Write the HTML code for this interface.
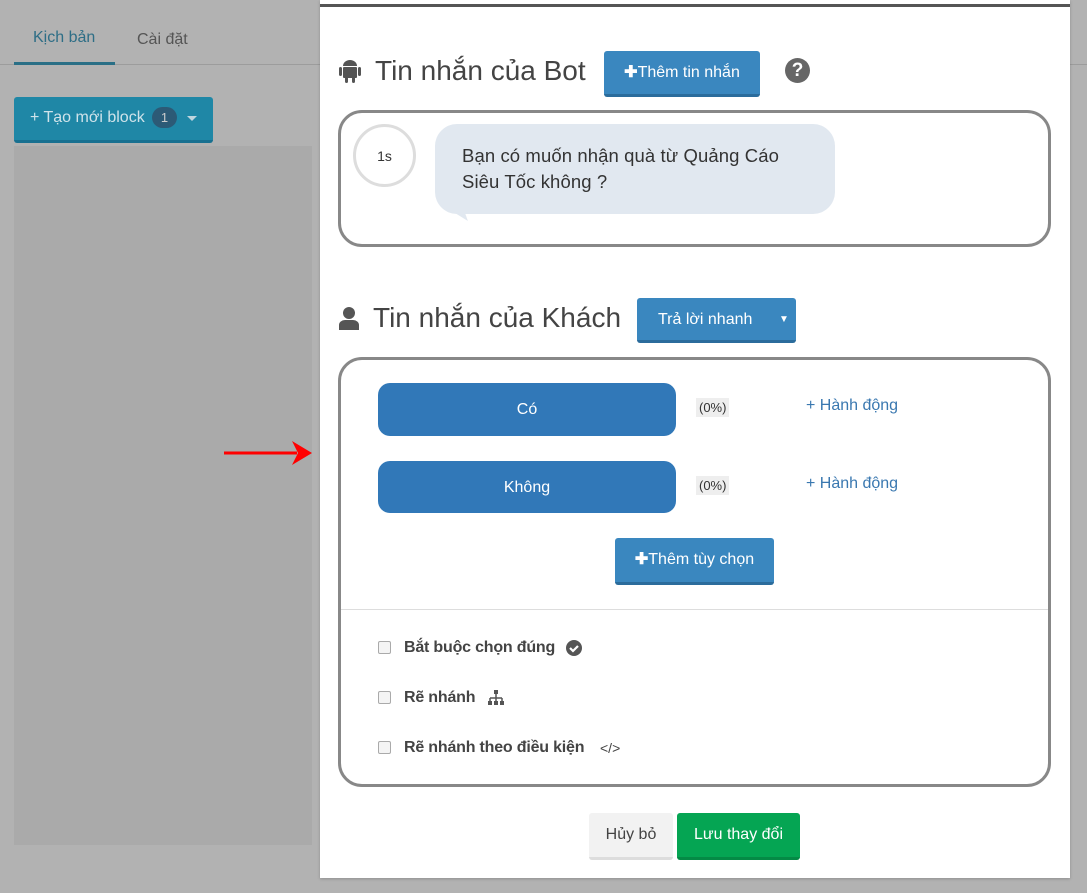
<!DOCTYPE html>
<html><head><meta charset="utf-8"><style>
*{box-sizing:border-box;margin:0;padding:0}
body{width:1087px;height:893px;background:#b2b2b2;font-family:"Liberation Sans",sans-serif;position:relative;overflow:hidden}
.a{position:absolute}
.btn{position:absolute;color:#fff;text-align:center;border-radius:3px}
.blue{background:#3a87bf;border-bottom:3px solid #2b6c9c}
.chk{position:absolute;width:13px;height:13px;border:1px solid #aaa;border-radius:2px;background:#f4f4f4;left:378px}
.lbl{position:absolute;left:404px;font-size:16px;font-weight:bold;color:#444;letter-spacing:-0.2px}
</style></head><body>
<div class="a" style="left:0;top:64px;width:1087px;height:1px;background:#9c9c9c"></div>
<div class="a" style="left:33px;top:29px;font-size:16px;color:#2e6e86">Kịch bản</div>
<div class="a" style="left:14px;top:62px;width:101px;height:3px;background:#2a6f86"></div>
<div class="a" style="left:137px;top:31px;font-size:16px;color:#555">Cài đặt</div>
<div class="a" style="left:14px;top:97px;width:199px;height:46px;background:#1f87a6;border-radius:3px;border-bottom:3px solid #187090"></div>
<div class="a" style="left:30px;top:109px;font-size:16px;color:#cfe3ea">+ Tạo mới block</div>
<div class="a" style="left:152px;top:107px;width:25px;height:21px;border-radius:11px;background:#2c5a76;color:#ccc;font-size:13px;text-align:center;line-height:21px">1</div>
<div class="a" style="left:187px;top:116px;border-left:5px solid transparent;border-right:5px solid transparent;border-top:5px solid #bfd6df"></div>
<div class="a" style="left:14px;top:146px;width:298px;height:699px;background:#aaa"></div>
<svg class="a" style="left:222px;top:435px" width="90" height="36"><line x1="2" y1="18" x2="75" y2="18" stroke="#f00" stroke-width="3"/><polygon points="70,6 90,18 70,30 76,18" fill="#f00"/></svg>

<div class="a" style="left:320px;top:0;width:750px;height:878px;background:#fff;box-shadow:0 1px 3px rgba(0,0,0,.2)"></div>
<div class="a" style="left:320px;top:4px;width:750px;height:3px;background:#555"></div>

<svg class="a" style="left:339px;top:58px" width="22" height="26" viewBox="0 0 22 26"><rect x="4" y="9" width="14" height="11" rx="1" fill="#555"/><path d="M4 8a7 6 0 0 1 14 0z" fill="#555"/><rect x="0" y="9" width="3" height="9" rx="1.5" fill="#555"/><rect x="19" y="9" width="3" height="9" rx="1.5" fill="#555"/><rect x="6" y="19" width="3" height="6" rx="1.5" fill="#555"/><rect x="13" y="19" width="3" height="6" rx="1.5" fill="#555"/></svg>
<div class="a" style="left:375px;top:55px;font-size:28px;color:#444">Tin nhắn của Bot</div>
<div class="btn blue" style="left:604px;top:51px;width:156px;height:46px;line-height:43px;font-size:16px"><b>✚</b>Thêm tin nhắn</div>
<div class="a" style="left:785px;top:58px;width:25px;height:25px;border-radius:50%;background:#666;color:#fff;font-weight:bold;font-size:19px;text-align:center;line-height:25px">?</div>

<div class="a" style="left:338px;top:110px;width:713px;height:137px;border:3px solid #888;border-radius:24px"></div>
<div class="a" style="left:353px;top:124px;width:63px;height:63px;border:3px solid #ddd;border-radius:50%;text-align:center;line-height:59px;font-size:14px;color:#333">1s</div>
<div class="a" style="left:435px;top:124px;width:400px;height:90px;background:#e1e8f0;border-radius:22px"></div>
<div class="a" style="left:445px;top:205px;width:0;height:0;border-left:20px solid transparent;border-top:16px solid #e1e8f0;transform:skewX(20deg)"></div>
<div class="a" style="left:462px;top:143px;font-size:18.5px;color:#333;line-height:26px;letter-spacing:0.1px">Bạn có muốn nhận quà từ Quảng Cáo<br>Siêu Tốc không ?</div>

<svg class="a" style="left:339px;top:306px" width="20" height="24" viewBox="0 0 20 24"><circle cx="10" cy="7" r="6" fill="#555"/><path d="M0 24v-5a6 5 0 0 1 6-5h8a6 5 0 0 1 6 5v5z" fill="#555"/></svg>
<div class="a" style="left:373px;top:302px;font-size:28px;color:#444">Tin nhắn của Khách</div>
<div class="btn blue" style="left:637px;top:298px;width:159px;height:45px;line-height:43px;font-size:16px;text-align:left;padding-left:21px">Trả lời nhanh<span style="position:absolute;left:142px;font-size:10px">▼</span></div>

<div class="a" style="left:338px;top:357px;width:713px;height:430px;border:3px solid #888;border-radius:24px"></div>
<div class="btn" style="left:378px;top:383px;width:298px;height:53px;background:#3178b8;border-radius:12px;line-height:54px;font-size:16px">Có</div>
<div class="btn" style="left:378px;top:461px;width:298px;height:52px;background:#3178b8;border-radius:12px;line-height:53px;font-size:16px">Không</div>
<div class="a" style="left:696px;top:398px;background:#eee;font-size:13px;color:#333;padding:2px 3px">(0%)</div>
<div class="a" style="left:696px;top:476px;background:#eee;font-size:13px;color:#333;padding:2px 3px">(0%)</div>
<div class="a" style="left:806px;top:397px;font-size:16px;color:#3a78b0">+ Hành động</div>
<div class="a" style="left:806px;top:475px;font-size:16px;color:#3a78b0">+ Hành động</div>
<div class="btn blue" style="left:615px;top:538px;width:159px;height:47px;line-height:44px;font-size:16px"><b>✚</b>Thêm tùy chọn</div>
<div class="a" style="left:341px;top:609px;width:707px;height:1px;background:#ddd"></div>

<div class="chk" style="top:641px"></div><div class="lbl" style="top:639px">Bắt buộc chọn đúng</div>
<svg class="a" style="left:566px;top:640px" width="16" height="16"><circle cx="8" cy="8" r="8" fill="#555"/><path d="M4 8l3 3 5-5" stroke="#fff" stroke-width="2.2" fill="none"/></svg>
<div class="chk" style="top:691px"></div><div class="lbl" style="top:689px">Rẽ nhánh</div>
<svg class="a" style="left:487px;top:690px" width="18" height="16"><rect x="7" y="0" width="4" height="4" fill="#555"/><path d="M9 4v4M3 8h12M3 8v3M9 8v3M15 8v3" stroke="#555" stroke-width="1.5" fill="none"/><rect x="1" y="11" width="4" height="4" fill="#555"/><rect x="7" y="11" width="4" height="4" fill="#555"/><rect x="13" y="11" width="4" height="4" fill="#555"/></svg>
<div class="chk" style="top:741px"></div><div class="lbl" style="top:739px">Rẽ nhánh theo điều kiện</div>
<div class="a" style="left:600px;top:740px;font-size:14px;color:#444">&lt;/&gt;</div>

<div class="btn" style="left:589px;top:813px;width:84px;height:47px;background:#f2f2f2;border-bottom:3px solid #ddd;color:#444;line-height:44px;font-size:16px">Hủy bỏ</div>
<div class="btn" style="left:677px;top:813px;width:123px;height:47px;background:#05a553;border-bottom:3px solid #048a45;line-height:44px;font-size:16px">Lưu thay đổi</div>
</body></html>
